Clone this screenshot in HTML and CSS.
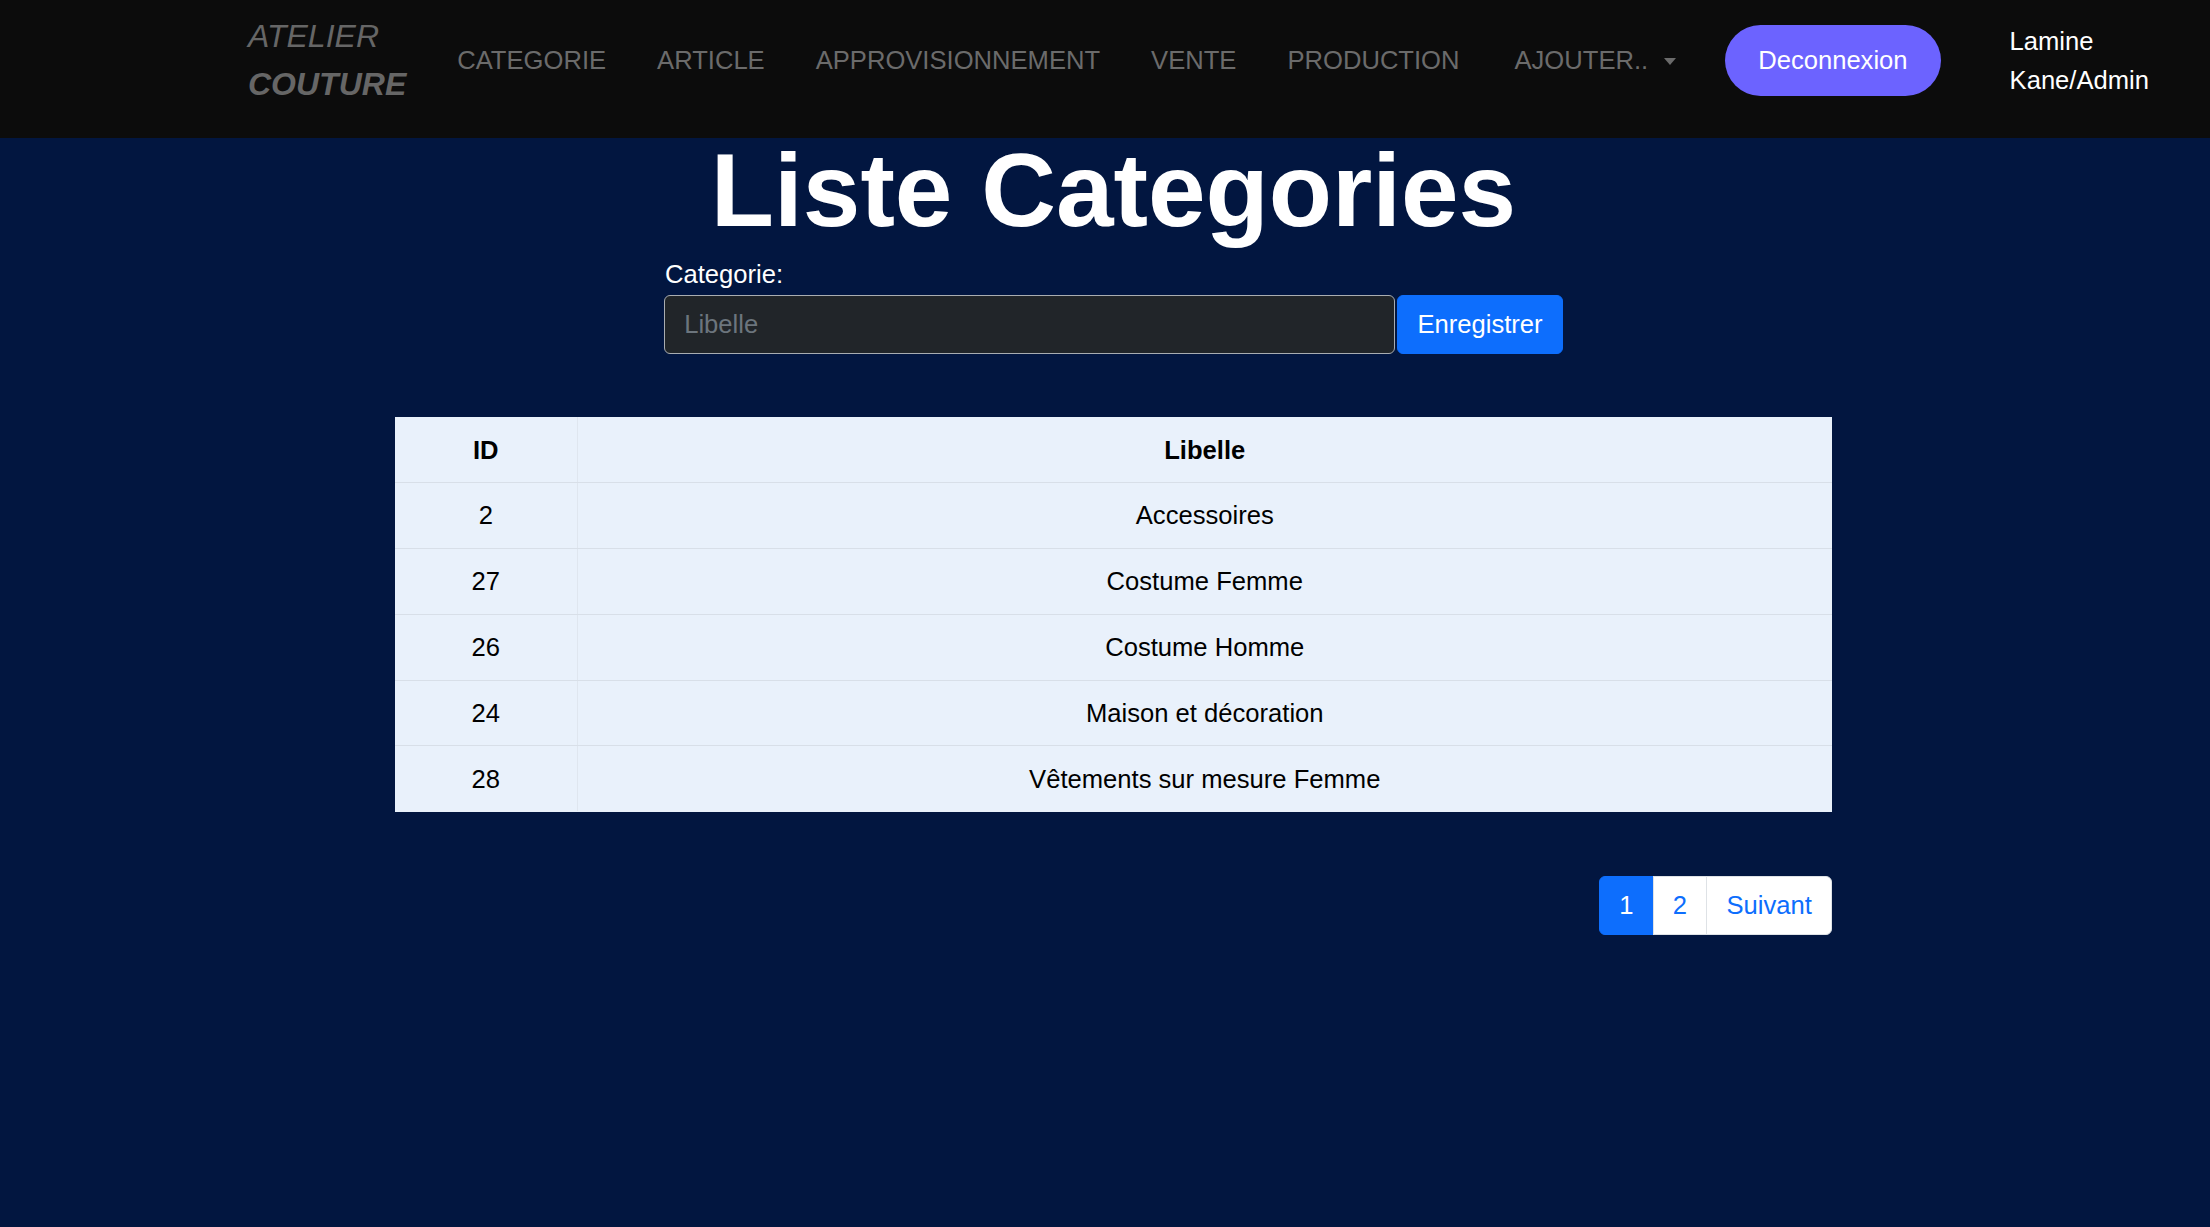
FILE: index.html
```html
<!DOCTYPE html>
<html lang="fr">
<head>
<meta charset="utf-8">
<title>Liste Categories</title>
<link rel="stylesheet" href="styles.css">
</head>
<body>
<header class="navbar">
  <a class="brand" href="#">
    <span class="brand-top">ATELIER</span>
    <span class="brand-bottom">COUTURE</span>
  </a>
  <ul class="nav">
    <li><a class="nav-link" href="#">CATEGORIE</a></li>
    <li><a class="nav-link" href="#">ARTICLE</a></li>
    <li><a class="nav-link" href="#">APPROVISIONNEMENT</a></li>
    <li><a class="nav-link" href="#">VENTE</a></li>
    <li><a class="nav-link" href="#">PRODUCTION</a></li>
    <li class="dropdown"><a class="nav-link dropdown-toggle" href="#">AJOUTER..</a></li>
  </ul>
  <a class="btn-logout" href="#">Deconnexion</a>
  <div class="user">Lamine<br>Kane/Admin</div>
</header>

<main class="main">
  <h1 class="title">Liste Categories</h1>

  <form class="cat-form">
    <label class="form-label" for="libelle">Categorie:</label>
    <div class="input-group">
      <input class="form-control" id="libelle" type="text" placeholder="Libelle">
      <button class="btn-save" type="button">Enregistrer</button>
    </div>
  </form>

  <table class="table">
    <thead>
      <tr><th class="col-id">ID</th><th>Libelle</th></tr>
    </thead>
    <tbody>
      <tr><td class="col-id">2</td><td>Accessoires</td></tr>
      <tr><td class="col-id">27</td><td>Costume Femme</td></tr>
      <tr><td class="col-id">26</td><td>Costume Homme</td></tr>
      <tr><td class="col-id">24</td><td>Maison et décoration</td></tr>
      <tr><td class="col-id">28</td><td>Vêtements sur mesure Femme</td></tr>
    </tbody>
  </table>

  <nav class="pager">
    <ul class="pagination">
      <li><a class="page-link active" href="#">1</a></li>
      <li><a class="page-link" href="#">2</a></li>
      <li><a class="page-link" href="#">Suivant</a></li>
    </ul>
  </nav>
</main>
</body>
</html>
```

FILE: styles.css
```css
* {
  box-sizing: border-box;
}

html, body {
  margin: 0;
  padding: 0;
}

body {
  min-height: 1227px;
  background: #021640;
  font-family: "Liberation Sans", Arial, sans-serif;
  font-size: 25.6px;
  line-height: 1.5;
  color: #ffffff;
}

a {
  text-decoration: none;
}

/* ---------- Navbar ---------- */
.navbar {
  height: 138px;
  background: #0c0c0c;
  display: flex;
  align-items: center;
  padding: 0 0 17px 248px;
}

.brand {
  display: flex;
  flex-direction: column;
  font-size: 32px;
  line-height: 48px;
  font-style: italic;
  color: #666666;
  margin-top: -2px;
}

.brand-top {
  font-weight: 400;
}

.brand-bottom {
  font-weight: 700;
}

.nav {
  list-style: none;
  margin: 0 0 0 51px;
  padding: 0;
  display: flex;
  align-items: center;
  gap: 51px;
}

.nav-link {
  color: #6b6b6b;
  line-height: 38.4px;
  display: inline-block;
}

.dropdown {
  margin-left: 4px;
}

.dropdown-toggle::after {
  content: "";
  display: inline-block;
  margin-left: 16px;
  vertical-align: 4px;
  border-top: 7.7px solid #6b6b6b;
  border-left: 6.5px solid transparent;
  border-right: 6.5px solid transparent;
}

.btn-logout {
  margin-left: 49px;
  height: 71px;
  padding: 0 33px;
  display: inline-flex;
  align-items: center;
  background: #6c63ff;
  color: #ffffff;
  border-radius: 36px;
}

.user {
  margin-left: 69px;
  color: #ffffff;
  line-height: 38.4px;
}

/* ---------- Main ---------- */
.main {
  padding-left: 17px;
  display: flex;
  flex-direction: column;
  align-items: center;
}

.title {
  margin: 1px 0 0;
  font-size: 103.5px;
  line-height: 0.99;
  font-weight: 700;
  color: #ffffff;
}

.cat-form {
  width: 899px;
  margin-top: 14px;
}

.form-label {
  display: block;
  line-height: 38.4px;
  margin-bottom: 1px;
  padding-left: 1px;
}

.input-group {
  display: flex;
}

.form-control {
  width: 731px;
  height: 59.6px;
  padding: 9.6px 19.2px;
  font: inherit;
  color: #dee2e6;
  background: #212529;
  border: 1px solid #a9adb1;
  border-radius: 6px;
  outline: none;
}

.form-control::placeholder {
  color: #6c757d;
}

.btn-save {
  margin-left: 2px;
  width: 166px;
  height: 59.6px;
  font: inherit;
  color: #ffffff;
  background: #0d6efd;
  border: 1px solid #0d6efd;
  border-radius: 6px;
  padding: 0;
}

/* ---------- Table ---------- */
.table {
  margin-top: 63px;
  width: 1437px;
  border-collapse: collapse;
  background: #e9f1fb;
  color: #000000;
}

.table th,
.table td {
  padding: 13.2px 8px;
  line-height: 38.4px;
  text-align: center;
  border-bottom: 1px solid #d8dfe8;
}

.table th {
  font-weight: 700;
}

.table tr:last-child td {
  border-bottom: 1px solid #e9f1fb;
}

.table .col-id {
  width: 182px;
  border-right: 1px solid #dfe6ef;
}

/* ---------- Pagination ---------- */
.pager {
  width: 1437px;
  display: flex;
  justify-content: flex-end;
  margin-top: 64px;
}

.pagination {
  list-style: none;
  margin: 0;
  padding: 0;
  display: flex;
}

.page-link {
  display: block;
  padding: 9px 19.2px;
  line-height: 38.4px;
  color: #0d6efd;
  background: #ffffff;
  border: 1px solid #dee2e6;
  margin-left: -1px;
}

.pagination li:first-child .page-link {
  margin-left: 0;
  border-radius: 6px 0 0 6px;
}

.pagination li:last-child .page-link {
  border-radius: 0 6px 6px 0;
}

.page-link.active {
  color: #ffffff;
  background: #0d6efd;
  border-color: #0d6efd;
}
```
